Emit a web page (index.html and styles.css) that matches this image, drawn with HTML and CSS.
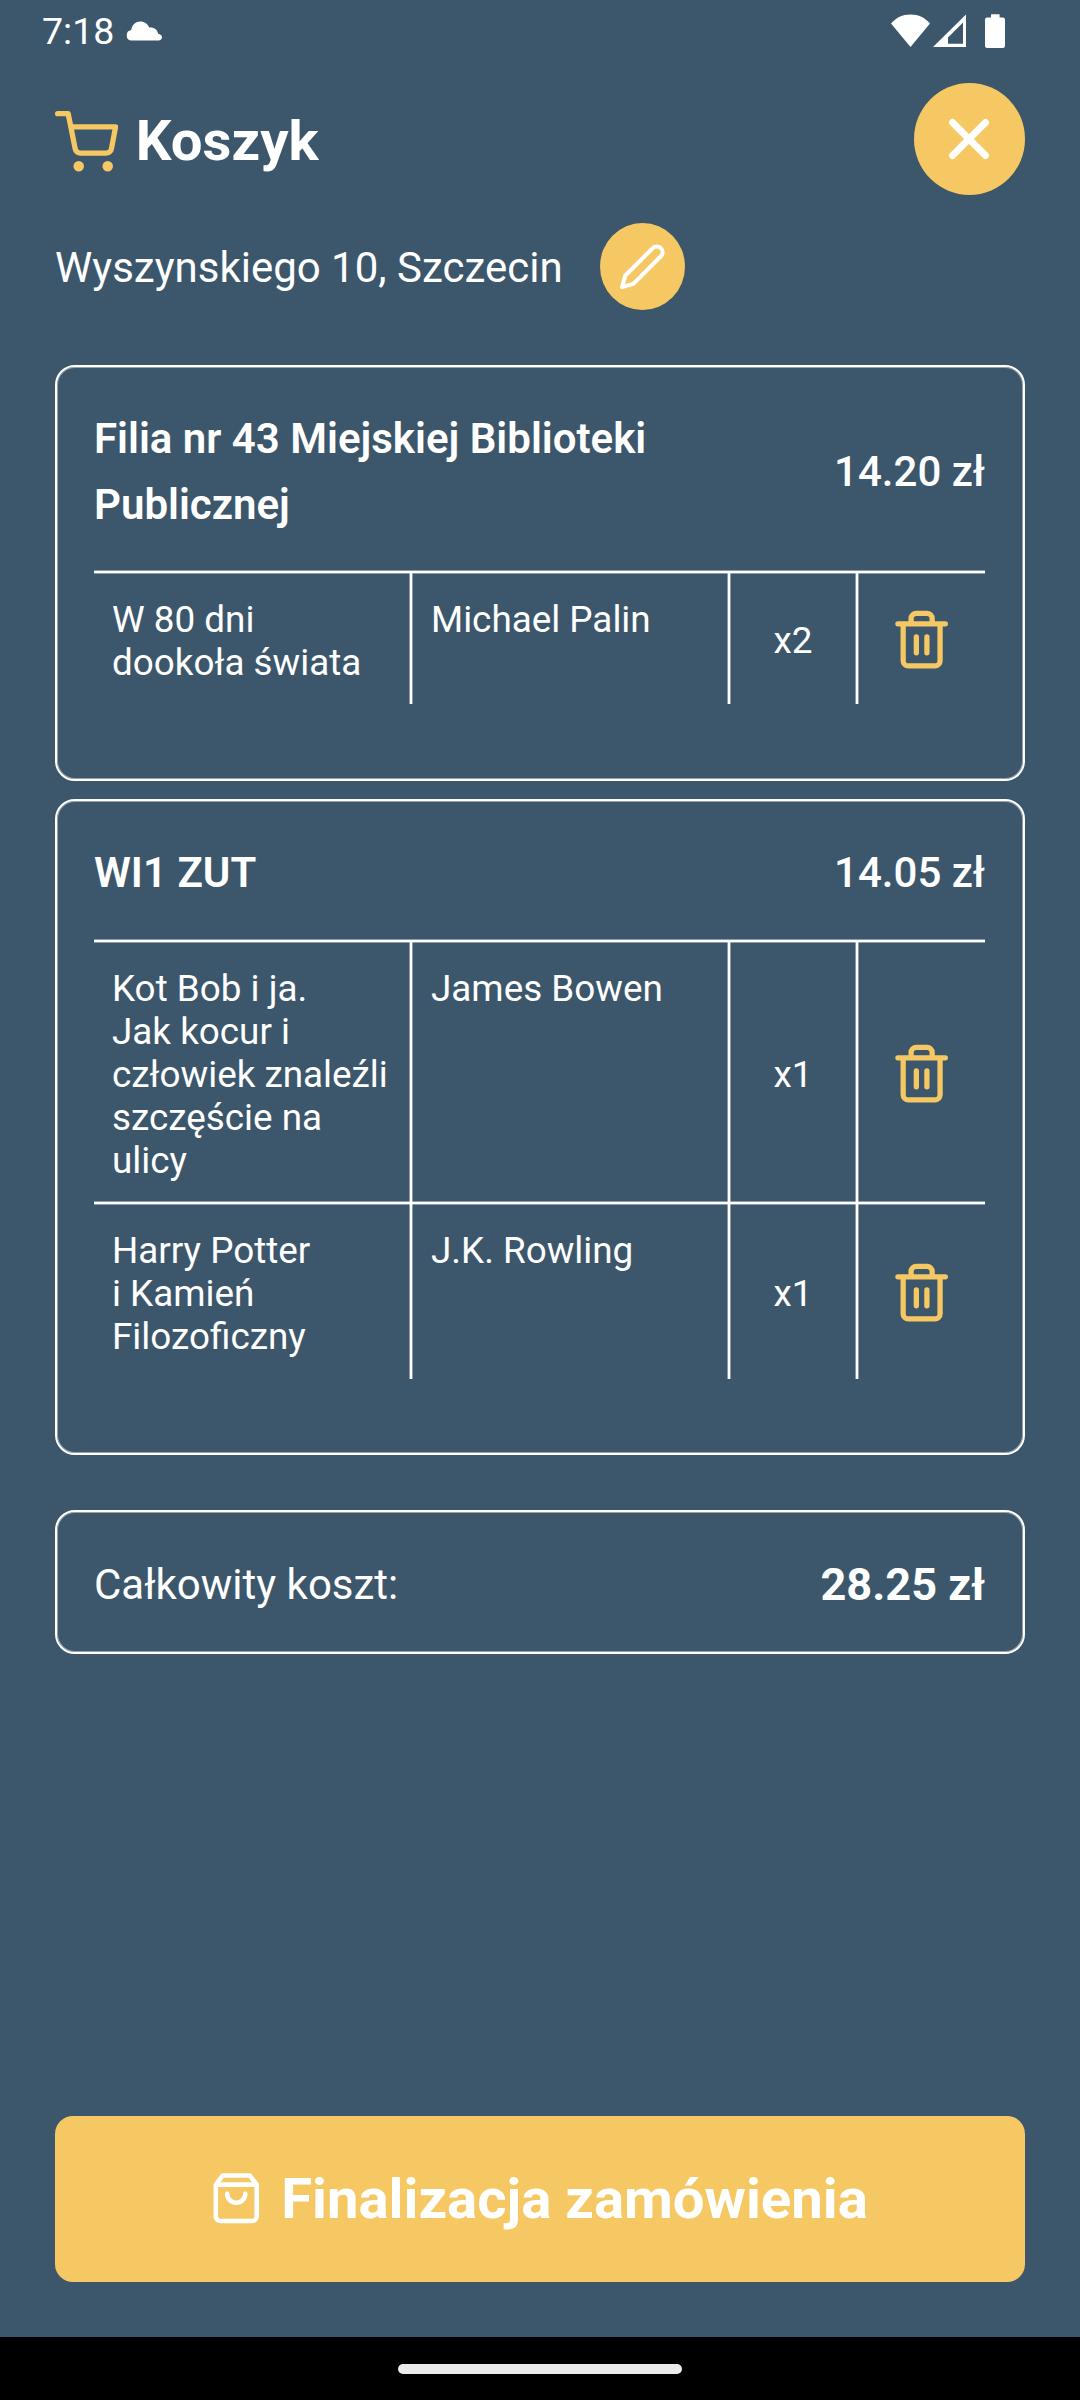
FILE: index.html
```html
<!DOCTYPE html>
<html lang="pl">
<head>
<meta charset="utf-8">
<title>Koszyk</title>
<link rel="stylesheet" href="styles.css">
</head>
<body>
<svg class="defs" width="0" height="0">
  <symbol id="trash" viewBox="0 0 24 24"><path d="M3 6h18M19 6v14a2 2 0 0 1-2 2H7a2 2 0 0 1-2-2V6M8 6V4a2 2 0 0 1 2-2h4a2 2 0 0 1 2 2v2M10 11v6M14 11v6"/></symbol>
</svg>
<div class="screen">
  <div class="status">
    <span class="clock">7:18</span>
    <svg class="cloud" width="36" height="20" viewBox="0 0 36 20"><path d="M5.6 19.6A5.4 5.4 0 0 1 5.2 8.9C6 3.700 9.800.4 14.400.4c4.200 0 7.500 2.500 8.900 6.100 4.400-.6 8.300 1.900 8.800 6.300 2.300.3 3.900 1.600 3.900 3.400s-1.500 3.400-3.500 3.400z"/></svg>
    <svg class="signals" width="116" height="36" viewBox="0 0 116 36">
      <path d="M1 9.500C6 3.500 12.500.4 20.500.4S35 3.500 40 9.500L20.500 33z"/>
      <path fill-rule="evenodd" d="M43 33L76 .5V33zM58 29.800H73V8.500L58 23.500z"/>
      <path d="M101 .3h8.600V3.500h3.200q2.200 0 2.200 2.200V32q0 2-2.200 2H97.200q-2.200 0-2.200-2V5.700q0-2.200 2.200-2.200H101z"/>
    </svg>
  </div>
  <header class="header">
    <svg class="icon cart" viewBox="0 0 24 24"><path d="M1 1h4l2.680 13.390a2 2 0 0 0 2 1.610h9.720a2 2 0 0 0 2-1.610L23 6H6"/><circle cx="9" cy="21" r="1"/><circle cx="20" cy="21" r="1"/></svg>
    <h1 class="title">Koszyk</h1>
    <button class="close" aria-label="Zamknij"><svg class="icon cross" viewBox="0 0 24 24"><path d="M6 6l12 12M18 6L6 18"/></svg></button>
  </header>
  <div class="address">
    <span class="street">Wyszynskiego 10, Szczecin</span>
    <button class="edit" aria-label="Edytuj"><svg class="icon pencil" viewBox="0 0 24 24"><path d="M17 3a2.828 2.828 0 1 1 4 4L7.500 20.500 2 22l1.500-5.500z"/></svg></button>
  </div>
  <section class="card order">
    <div class="order-head"><h2 class="place">Filia nr 43 Miejskiej Biblioteki<br>Publicznej</h2><span class="price">14.20 zł</span></div>
    <div class="row">
      <div class="cell">W 80 dni<br>dookoła świata</div><div class="cell author">Michael Palin</div>
      <div class="cell qty">x2</div><div class="cell del"><svg class="icon trash"><use href="#trash"/></svg></div>
    </div>
  </section>
  <section class="card order">
    <div class="order-head"><h2 class="place">WI1 ZUT</h2><span class="price">14.05 zł</span></div>
    <div class="row">
      <div class="cell">Kot Bob i ja.<br>Jak kocur i<br>człowiek znaleźli<br>szczęście na<br>ulicy</div><div class="cell author">James Bowen</div>
      <div class="cell qty">x1</div><div class="cell del"><svg class="icon trash"><use href="#trash"/></svg></div>
    </div>
    <div class="row">
      <div class="cell">Harry Potter<br>i Kamień<br>Filozoficzny</div><div class="cell author">J.K. Rowling</div>
      <div class="cell qty">x1</div><div class="cell del"><svg class="icon trash"><use href="#trash"/></svg></div>
    </div>
  </section>
  <section class="card total"><span>Całkowity koszt:</span><strong class="sum">28.25 zł</strong></section>
  <button class="checkout"><svg class="icon bag" viewBox="0 0 24 24"><path d="M6 2L3 6v14a2 2 0 0 0 2 2h14a2 2 0 0 0 2-2V6l-3-4zM3 6h18M16 10a4 4 0 0 1-8 0"/></svg><span>Finalizacja zamówienia</span></button>
  <div class="navbar"><span class="handle"></span></div>
</div>
</body>
</html>
```
FILE: styles.css
```css
* { box-sizing: border-box; }
body { margin: 0; background: #3c576b; color: #fff; font-family: Roboto, "Liberation Sans", sans-serif; font-size: 42px; }
h1, h2 { margin: 0; }
button { border: 0; padding: 0; background: #f6c864; color: #fff; font-family: inherit; display: flex; align-items: center; justify-content: center; }
.defs { display: block; height: 0; }
.screen { width: 1080px; height: 2400px; display: flex; flex-direction: column; }
.icon { display: block; flex: none; fill: none; stroke: #fff; stroke-width: 2; stroke-linecap: round; stroke-linejoin: round; }

.status { height: 83px; padding: 14px 74px 0 42px; display: flex; align-items: flex-start; fill: #fff; }
.clock { font-size: 37.500px; line-height: 35px; }
.cloud { margin: 7px 0 0 12px; }
.signals { margin-left: auto; }

.header { height: 112px; padding: 0 55px; display: flex; align-items: center; }
.cart { width: 63.250px; height: 63.250px; margin-top: 8px; stroke: #f6c864; }
.cart circle { fill: #f6c864; }
.title { margin: 4px auto 0 17.500px; font-size: 56.300px; line-height: 66px; font-weight: 700; }
.close { width: 111px; height: 112px; border-radius: 50%; }
.cross { width: 66px; height: 66px; margin-right: 1px; stroke-width: 2.500; }

.address { height: 87px; margin: 28px 55px 55px; display: flex; align-items: center; gap: 37px; }
.street { padding-top: 2px; }
.edit { width: 85px; height: 87px; border-radius: 50%; }
.pencil { width: 49px; height: 49px; }

.card { margin: 0 55px; padding: 0 38px 0 37px; border: 2px solid #fff; border-radius: 20px; box-shadow: inset 0 0 0 1px rgba(255, 255, 255, .45); }
.order { padding-top: 39px; padding-bottom: 75px; }
.order + .order { margin-top: 18px; }
.order-head { min-height: 100px; display: flex; align-items: center; justify-content: space-between; padding-bottom: 34px; line-height: 65.500px; }
.place { font-size: inherit; font-weight: 600; }
.price { font-weight: 500; }
.row { display: grid; grid-template-columns: 318px 318px 128px 1fr; border-top: 2px solid #fff; box-shadow: 0 -1px rgba(255, 255, 255, .4), inset 0 1px rgba(255, 255, 255, .4); font-size: 36.850px; line-height: 43px; }
.row + .row { height: 177px; margin-bottom: -1px; }
.cell { padding: 25px 0 20px 18px; border-right: 2px solid #fff; box-shadow: 1px 0 rgba(255, 255, 255, .4), inset -1px 0 rgba(255, 255, 255, .4); }
.author { padding-left: 19px; }
.qty, .del { padding: 3px 0 0; display: flex; align-items: center; justify-content: center; }
.qty { padding-top: 4px; }
.del { border: 0; box-shadow: none; }
.trash { width: 63.250px; height: 63.250px; stroke: #f6c864; }

.total { height: 144px; margin-top: 55px; padding-top: 4px; display: flex; align-items: center; justify-content: space-between; }
.sum { font-size: 45.100px; font-weight: 700; }

.checkout { height: 166px; margin: auto 55px 55px; padding-right: 3px; border-radius: 18px; font-size: 56.300px; font-weight: 700; gap: 17.500px; }
.bag { width: 54.500px; height: 54.500px; margin-top: -2px; }
.navbar { height: 63px; background: #000; display: flex; align-items: center; justify-content: center; }
.handle { width: 284px; height: 10px; border-radius: 5px; background: #ebebeb; }
```
